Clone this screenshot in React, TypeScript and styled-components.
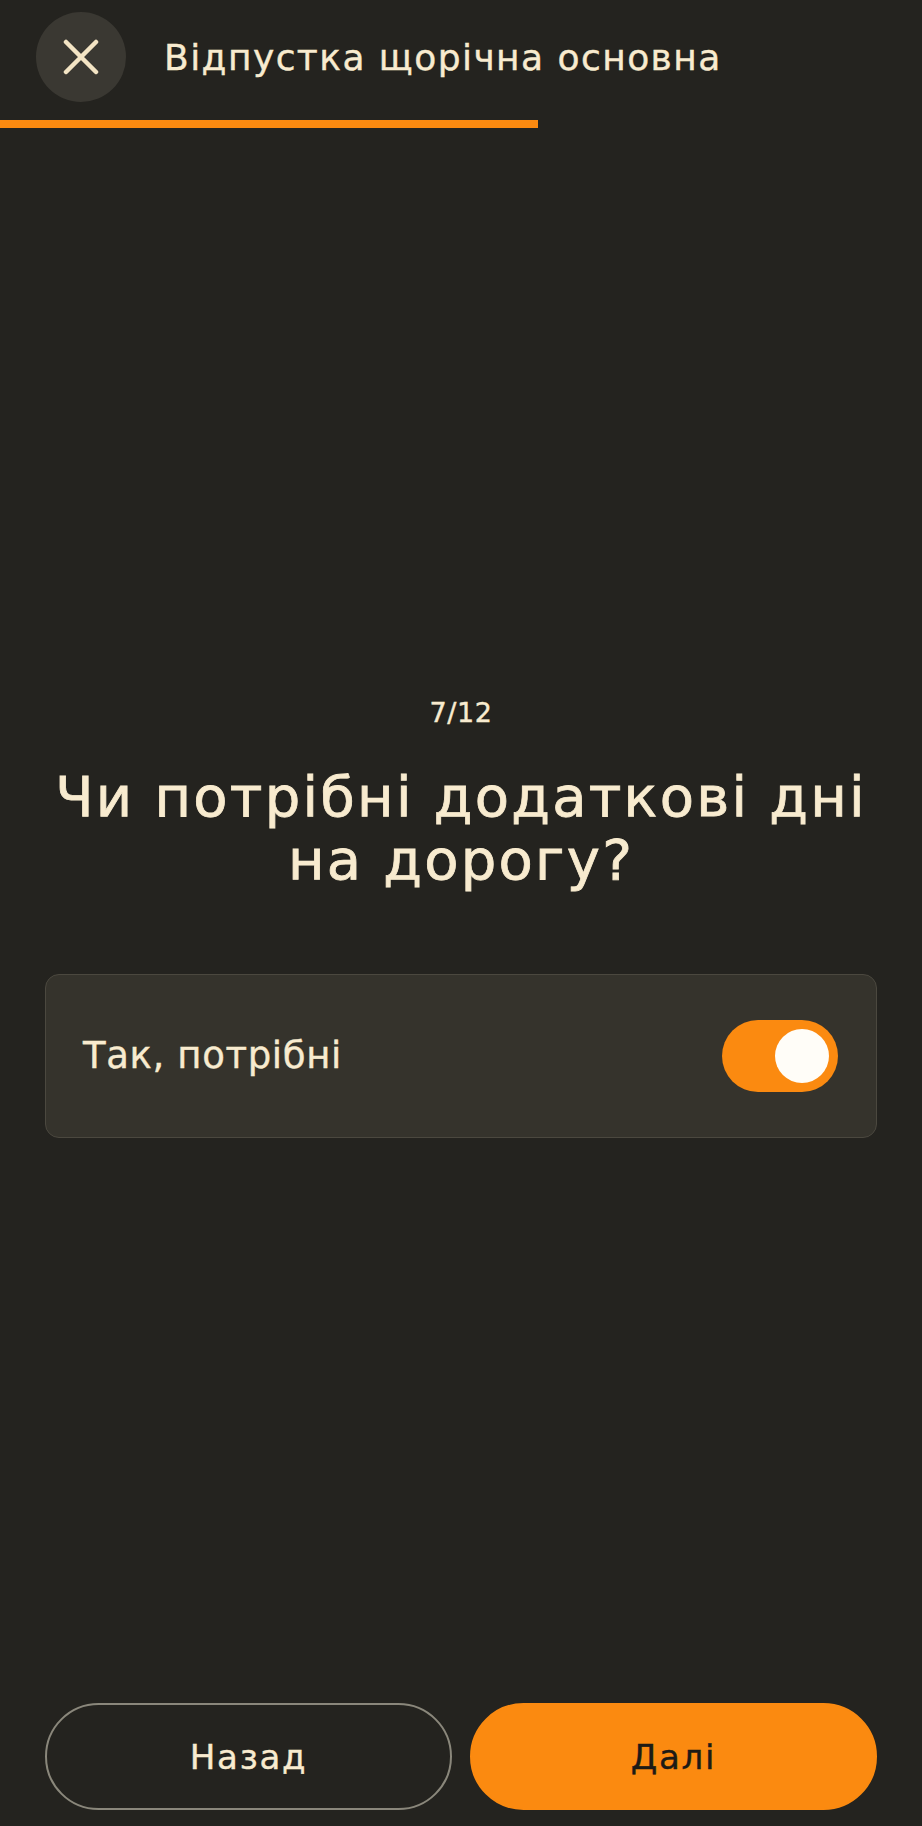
import React, { useState } from 'react';
import styled, { createGlobalStyle } from 'styled-components';

const GlobalStyle = createGlobalStyle`
  html, body {
    margin: 0;
    padding: 0;
    background: #24231f;
  }
  body {
    font-family: "DejaVu Sans", "Liberation Sans", sans-serif;
    color: #f8ebcf;
    letter-spacing: 0.04em;
    -webkit-text-stroke: 0.4px currentColor;
  }
`

const Page = styled.div`
  min-height: 1826px;
  display: flex;
  flex-direction: column;
  background: #24231f;
`

const Header = styled.header`
  display: flex;
  align-items: center;
  gap: 38px;
  padding: 12px 36px 0;
`

const CloseButton = styled.button`
  width: 90px;
  height: 90px;
  border-radius: 50%;
  border: none;
  background: #3a3832;
  display: flex;
  align-items: center;
  justify-content: center;
  padding: 0;
  cursor: pointer;
`

const Title = styled.h1`
  margin: 0;
  font-size: 36px;
  font-weight: 400;
  letter-spacing: 0.04em;
  color: #f8ebcf;
`

const Progress = styled.div`
  margin-top: 18px;
  height: 8px;
`

const ProgressFill = styled.div`
  height: 100%;
  background: #fb8a10;
`

const Main = styled.main`
  flex: 1;
  display: flex;
  flex-direction: column;
  justify-content: center;
  padding: 3px 45px 0;
`

const Counter = styled.div`
  text-align: center;
  font-size: 27px;
  line-height: 32px;
`

const Question = styled.h2`
  margin: 36px 0 0;
  text-align: center;
  font-size: 56px;
  line-height: 63px;
  font-weight: 400;
  letter-spacing: 0.04em;
  -webkit-text-stroke: 0.8px currentColor;
  color: #f8ebcf;
`

const OptionCard = styled.label`
  margin-top: 83px;
  height: 164px;
  box-sizing: border-box;
  display: flex;
  align-items: center;
  justify-content: space-between;
  padding: 0 38px 0 37px;
  background: #35332c;
  border: 1px solid #4b483f;
  border-radius: 14px;
`

const OptionText = styled.span`
  font-size: 37px;
`

const Track = styled.button<{ $on: boolean }>`
  width: 116px;
  height: 72px;
  border-radius: 36px;
  border: none;
  padding: 9px;
  display: flex;
  justify-content: ${p => (p.$on ? 'flex-end' : 'flex-start')};
  background: ${p => (p.$on ? '#fb8a10' : '#5a574d')};
  cursor: pointer;
`

const Knob = styled.span`
  width: 54px;
  height: 54px;
  border-radius: 50%;
  background: #fffdf8;
`

const Footer = styled.footer`
  display: grid;
  grid-template-columns: 1fr 1fr;
  gap: 18px;
  padding: 0 45px 16px;
`

const NavButton = styled.button<{ $primary?: boolean }>`
  height: 107px;
  border-radius: 54px;
  font-family: "DejaVu Sans", "Liberation Sans", sans-serif;
  letter-spacing: 0.05em;
  -webkit-text-stroke: 0.4px currentColor;
  font-size: 34px;
  cursor: pointer;
  background: ${p => (p.$primary ? '#fb8a10' : 'transparent')};
  color: ${p => (p.$primary ? '#1d1b16' : '#f8ebcf')};
  border: 2px solid ${p => (p.$primary ? '#fb8a10' : '#8a877b')};
`

const CloseIcon = () => (
  <svg width="36" height="36" viewBox="0 0 36 36" fill="none">
    <path d="M3 3 L33 33 M33 3 L3 33" stroke="#f3e4c4" strokeWidth="4.5" strokeLinecap="round" />
  </svg>
)

const App: React.FC = () => {
  const [needed, setNeeded] = useState(true)
  const step = 7
  const total = 12

  return (
    <Page>
      <GlobalStyle />
      <Header>
        <CloseButton aria-label="Закрити">
          <CloseIcon />
        </CloseButton>
        <Title>Відпустка щорічна основна</Title>
      </Header>
      <Progress>
        <ProgressFill style={{ width: `${(step / total) * 100}%` }} />
      </Progress>
      <Main>
        <Counter>{step}/{total}</Counter>
        <Question>
          Чи потрібні додаткові дні
          <br />
          на дорогу?
        </Question>
        <OptionCard>
          <OptionText>Так, потрібні</OptionText>
          <Track $on={needed} onClick={() => setNeeded(!needed)}>
            <Knob />
          </Track>
        </OptionCard>
      </Main>
      <Footer>
        <NavButton>Назад</NavButton>
        <NavButton $primary>Далі</NavButton>
      </Footer>
    </Page>
  )
}

export default App
